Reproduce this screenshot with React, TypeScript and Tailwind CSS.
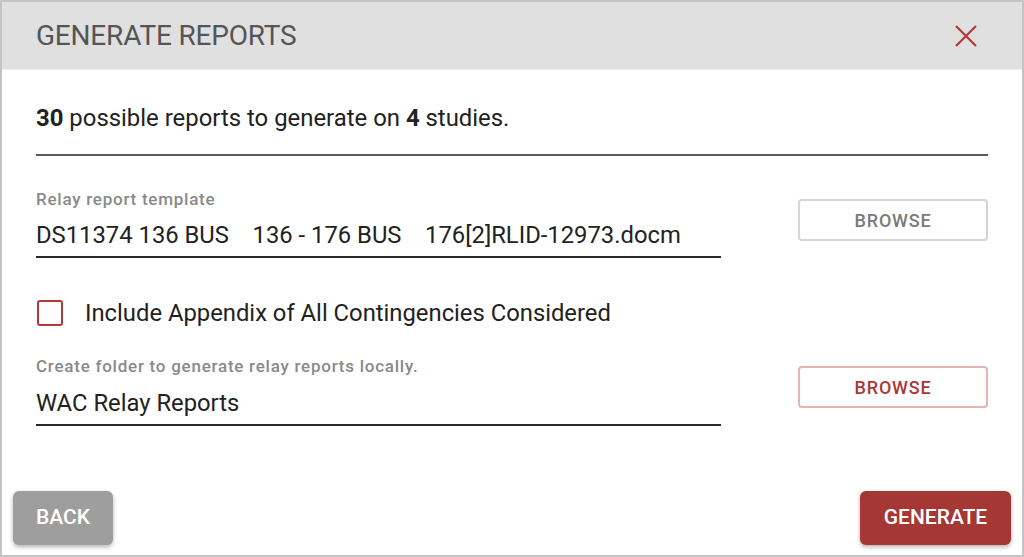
import React from "react";

export default function App() {
  return (
    <div
      className="w-[1024px] h-[557px] bg-white border-2 border-[#c4c4c4] flex flex-col"
      style={{ fontFamily: "Roboto, 'Liberation Sans', sans-serif" }}
    >
      <div className="h-[68px] bg-[#e0e0e0] border-b border-[#ececec] flex items-center justify-between pl-[34px] pr-[44px] shrink-0">
        <div className="text-[28px] leading-[32px] text-[#555555] tracking-[-0.2px]">GENERATE REPORTS</div>
        <svg width="24" height="24" viewBox="0 0 24 24" className="text-[#b23a3a]">
          <path d="M2 2 L22 22 M22 2 L2 22" stroke="currentColor" strokeWidth="2.2" fill="none" />
        </svg>
      </div>

      <div className="flex-1 flex flex-col px-[34px]">
        <div className="pt-[34px] pb-[22px] border-b-2 border-[#5a5a5a] text-[23.9px] leading-[28px] text-[#222]">
          <span className="font-bold">30</span> possible reports to generate on <span className="font-bold">4</span> studies.
        </div>

        <div className="flex items-start justify-between mt-[34px]">
          <div className="w-[685px] flex flex-col">
            <div className="text-[17px] leading-[18px] font-medium text-[#8a8a8a] tracking-[0.75px]">Relay report template</div>
            <div className="mt-[13px] pb-[7px] border-b-2 border-[#2a2a2a] text-[23.8px] leading-[28px] text-[#222] whitespace-pre">
              {"DS11374 136 BUS    136 - 176 BUS    176[2]RLID-12973.docm"}
            </div>
          </div>
          <button className="mt-[9px] w-[190px] h-[42px] rounded-[4px] border-2 border-[#d6d6d6] bg-white text-[18px] font-medium text-[#7a7a7a] tracking-[0.8px]">
            BROWSE
          </button>
        </div>

        <div className="flex items-center mt-[41px]">
          <div className="w-[26px] h-[26px] ml-[1px] rounded-[3px] border-[2.5px] border-[#b03a3a]" />
          <div className="ml-[22px] text-[23.8px] leading-[28px] text-[#222]">Include Appendix of All Contingencies Considered</div>
        </div>

        <div className="flex items-start justify-between mt-[30px]">
          <div className="w-[685px] flex flex-col">
            <div className="text-[17px] leading-[18px] font-medium text-[#8a8a8a] tracking-[0.75px]">Create folder to generate relay reports locally.</div>
            <div className="mt-[14px] pb-[7px] border-b-2 border-[#2a2a2a] text-[23.8px] leading-[28px] text-[#222]">
              WAC Relay Reports
            </div>
          </div>
          <button className="mt-[9px] w-[190px] h-[42px] rounded-[4px] border-2 border-[#e4b4b4] bg-white text-[18px] font-medium text-[#a83a36] tracking-[0.8px]">
            BROWSE
          </button>
        </div>
      </div>

      <div className="flex items-center justify-between px-[11px] pb-[10px] shrink-0">
        <button className="w-[100px] h-[54px] rounded-[6px] bg-[#9e9e9e] text-white text-[21px] font-medium shadow-[0_2px_4px_rgba(0,0,0,0.3)]">
          BACK
        </button>
        <button className="w-[151px] h-[54px] rounded-[6px] bg-[#a53734] text-white text-[21px] font-medium shadow-[0_2px_4px_rgba(0,0,0,0.3)]">
          GENERATE
        </button>
      </div>
    </div>
  );
}
